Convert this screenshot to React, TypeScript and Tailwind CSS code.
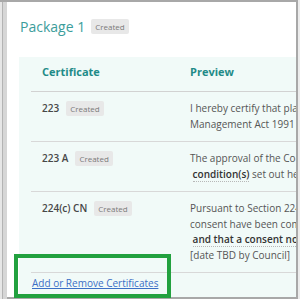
import React from 'react';

function Badge() {
  return (
    <span className="inline-block rounded-[2px] bg-[#e8e8e8] px-[4px] text-[8px] leading-[15px] text-[#7a7a7a]">
      Created
    </span>
  );
}

function Hl({ children }: { children: React.ReactNode }) {
  return (
    <span className="font-semibold text-[#333] border-b border-dotted border-[#b8b8b8]">
      {children}
    </span>
  );
}

const rows: { cert: string; lines: React.ReactNode[] }[] = [
  {
    cert: '223',
    lines: [
      'I hereby certify that plans of subdivision have been approved',
      'Management Act 1991 on the date shown below',
    ],
  },
  {
    cert: '223 A',
    lines: [
      'The approval of the Council is subject to the',
      <>
        {' '}
        <Hl>condition(s)</Hl> set out herein
      </>,
    ],
  },
  {
    cert: '224(c) CN',
    lines: [
      'Pursuant to Section 224(c) the conditions of',
      'consent have been complied with in full',
      <>
        {' '}
        <Hl>and that a consent notice has been issued in respect</Hl>
      </>,
      '[date TBD by Council]',
    ],
  },
];

export default function App() {
  return (
    <div className="relative flex h-[299px] w-[300px] overflow-hidden bg-[#ececec] font-['Open_Sans',sans-serif]">
      {/* left frame strip */}
      <div className="flex h-full w-[7px] border-t-2 border-[#a8a8a8]">
        <div className="w-[2px] bg-[#e6e6e6]" />
        <div className="w-[1px] bg-[#b3b3b3]" />
        <div className="flex-1 bg-[#d6d6d6]" />
      </div>

      <div className="flex h-[299px] w-[291px] flex-col overflow-hidden border-t-2 border-r-2 border-b-2 border-[#a8a8a8] bg-white">
        {/* Title */}
        <div className="flex items-center gap-[6px] pl-[13px] pt-[15px]">
          <h2 className="text-[14px] leading-[19px] text-[#3c9d9b]">Package 1</h2>
          <Badge />
        </div>

        {/* Table panel */}
        <div className="ml-[12px] mt-[21px] flex-1 bg-[#f1faf8] pl-[12px]">
          <div className="flex border-b border-[#d2d2d2] pt-[7px] pb-[11px] text-[11px] font-bold leading-[16px] text-[#1f8b88]">
            <div className="w-[148px] shrink-0 pl-[11px]">Certificate</div>
            <div className="pl-[11px]">Preview</div>
          </div>

          {rows.map((row) => (
            <div key={row.cert} className="flex border-b border-[#d8d8d8]">
              <div className="flex w-[148px] shrink-0 items-start gap-[7px] py-[9px] pl-[11px]">
                <span className="text-[10px] font-semibold leading-[15.5px] text-[#474747]">
                  {row.cert}
                </span>
                <Badge />
              </div>
              <div className="min-w-0 flex-1 overflow-hidden whitespace-pre py-[9px] pl-[11px] text-[10px] leading-[15.5px] text-[#555]">
                {row.lines.map((line, i) => (
                  <div key={i}>{line}</div>
                ))}
              </div>
            </div>
          ))}

          <div className="pl-[1px] pt-[2px] text-[10px] leading-[16px]">
            <a href="#" className="text-[#3b6fc6] underline">
              Add or Remove Certificates
            </a>
          </div>
        </div>
      </div>

      {/* highlight annotation */}
      <div className="absolute left-[14px] top-[254px] h-[44px] w-[157px] border-[4px] border-[#22a13f]" />
    </div>
  );
}
